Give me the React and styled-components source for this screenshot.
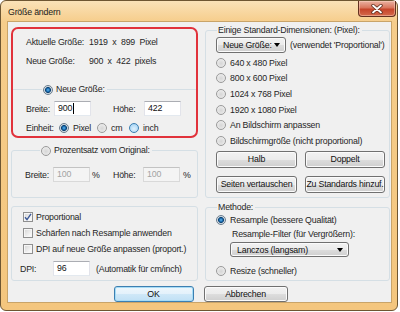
import React from "react";
import styled, { createGlobalStyle, css } from "styled-components";

const GlobalStyle = createGlobalStyle`
  html, body { margin: 0; padding: 0; background: #fff; }
  body {
    font-family: "Liberation Sans", Arial, sans-serif;
    font-size: 8.8px;
    letter-spacing: -0.2px;
    color: #262626;
  }
  * { box-sizing: border-box; }
`;

const Window = styled.div`
  width: 398px;
  height: 311px;
  border: 1px solid #6e5632;
  border-radius: 6px;
  background: linear-gradient(#fae2b8 0, #f6cd8b 21px, #f4c67e 100%);
  display: flex;
  flex-direction: column;
`;

const TitleBar = styled.div`
  height: 20px;
  display: flex;
  align-items: flex-start;
  padding-left: 7px;
`;

const Title = styled.div`
  line-height: 20px;
  padding-top: 1px;
  color: #1a1a1a;
`;

const CloseButton = styled.div`
  margin-left: auto;
  margin-right: 1px;
  width: 38px;
  height: 16px;
  border: 1px solid #63301f;
  border-top: none;
  border-radius: 0 0 4px 4px;
  background: linear-gradient(#eab2a2 0%, #d9765d 45%, #c6452a 55%, #d46a4c 100%);
  box-shadow: inset 0 0 0 1px rgba(255, 220, 200, 0.45);
  display: flex;
  align-items: center;
  justify-content: center;
`;

const Client = styled.div`
  margin: 0 5px 0 6px;
  height: 282px;
  border: 1px solid #c9a469;
  background: #f0f0f0;
  display: flex;
  flex-direction: column;
  padding: 0 1px 0 3px;
`;

const Columns = styled.div`
  display: grid;
  grid-template-columns: 187px 185px;
  grid-template-rows: 176px 83px;
  column-gap: 7px;
`;

const LeftTop = styled.div`
  display: flex;
  flex-direction: column;
  padding-top: 5px;
`;

const RedBox = styled.div`
  height: 111px;
  border: 2px solid #e1323b;
  border-radius: 7px;
  padding-top: 7px;
  display: flex;
  flex-direction: column;
`;

const InfoRow = styled.div`
  display: grid;
  grid-template-columns: 63px auto;
  height: 13px;
  line-height: 13px;
  padding-left: 13px;
  margin-bottom: 6px;
  white-space: pre;
`;

const Group = styled.fieldset`
  margin: ${p => p.$mt || 0}px 0 0 0;
  padding: 0 0 0 ${p => p.$pl || 0}px;
  min-width: 0;
  height: ${p => p.$h}px;
  border: 1px solid #d5dfe5;
  border-radius: 3px;
  ${p => p.$topOnly && css`
    border-width: 1px 0 0 0;
    border-radius: 0;
  `}
`;

const Caption = styled.legend`
  margin-left: ${p => p.$indent || 1}px;
  padding: 0 2px 0 1px;
  height: 13px;
  line-height: 13px;
  display: flex;
  align-items: center;
  gap: 3px;
`;

const Row = styled.div`
  display: flex;
  align-items: center;
  height: ${p => p.$h || 15}px;
  margin-top: ${p => p.$mt || 0}px;
  margin-left: ${p => p.$ml || 0}px;
  white-space: nowrap;
`;

const Label = styled.span`
  width: ${p => p.$w}px;
  margin-left: ${p => p.$ml || 0}px;
  flex: none;
`;

const TextBox = styled.div`
  width: ${p => p.$w || 37}px;
  height: 15px;
  flex: none;
  border: 1px solid;
  border-color: #abadb3 #e2e3ea #e3e9ef #e2e3ea;
  background: #fff;
  padding: 0 3px;
  line-height: 13px;
  color: #111;
  display: flex;
  align-items: center;
  ${p => p.$disabled && css`
    background: #f4f4f4;
    color: #a3a3a3;
    border-color: #c3c3c3 #d9d9d9 #d9d9d9 #d9d9d9;
  `}
`;

const Caret = styled.span`
  width: 1px;
  height: 11px;
  background: #000;
  margin-left: 0.5px;
`;

const Radio = styled.span`
  width: 10px;
  height: 10px;
  flex: none;
  border-radius: 50%;
  border: 1px solid #9a9a9a;
  background: radial-gradient(circle at 50% 55%, #d6d6d6 0, #e6e6e6 55%, #f8f8f8 100%);
  margin-right: 4px;
  ${p => p.$checked && css`
    border-color: #6b7c8c;
    background: radial-gradient(circle, #67b8ef 0, #1c70b4 1.6px, #0d3d6b 2.7px, #c9d6e0 3.2px, #f2f2f2 100%);
  `}
  ${p => p.$hot && css`
    border-color: #3c7fb1;
    background: radial-gradient(circle at 50% 60%, #dff1fd 0, #b5dcf7 60%, #8cc7ee 100%);
  `}
`;

const Check = styled.span`
  width: 10px;
  height: 10px;
  flex: none;
  border: 1px solid #8f8f8f;
  background: linear-gradient(135deg, #d4d4d4, #f4f4f4 70%, #fff);
  box-shadow: inset 0 0 0 1px #f6f6f6;
  margin-right: 3px;
  display: flex;
  align-items: center;
  justify-content: center;
`;

const WinButton = styled.div`
  height: ${p => p.$h || 17}px;
  width: ${p => (p.$w ? `${p.$w}px` : "auto")};
  border: 1px solid #707070;
  border-radius: 3px;
  background: linear-gradient(#f2f2f2 0%, #ebebeb 50%, #dddddd 51%, #cfcfcf 100%);
  box-shadow: inset 0 0 0 1px #fbfbfb;
  display: flex;
  align-items: center;
  justify-content: ${p => p.$left ? "space-between" : "center"};
  padding: ${p => p.$left ? "0 5px 0 6px" : "0"};
  color: #111;
  white-space: nowrap;
  ${p => p.$default && css`
    border-color: #3c7fb1;
    box-shadow: inset 0 0 0 1px #a6dcf6;
    background: linear-gradient(#eef7fc 0%, #e3f1fb 50%, #cfe8f8 51%, #c0e0f5 100%);
  `}
`;

const Arrow = styled.span`
  width: 0;
  height: 0;
  border-left: 3.5px solid transparent;
  border-right: 3.5px solid transparent;
  border-top: 4px solid #000;
`;

const ButtonGrid = styled.div`
  display: grid;
  grid-template-columns: 81px 80px;
  column-gap: 8px;
  row-gap: 8px;
  margin-top: 2px;
`;

const Footer = styled.div`
  display: flex;
  justify-content: center;
  gap: 10px;
  margin-top: 5px;
`;

const RadioRow = ({ children, checked, hot, h = 15.6, mt }) => (
  <Row $h={h} $mt={mt}>
    <Radio $checked={checked} $hot={hot} />
    {children}
  </Row>
);

const CheckRow = ({ children, checked }) => (
  <Row $h={16}>
    <Check>
      {checked && (
        <svg width="8" height="8" viewBox="0 0 8 8">
          <path d="M1 4.2 L3 6.6 L7 0.8" fill="none" stroke="#3d5a98" strokeWidth="1.4" />
        </svg>
      )}
    </Check>
    {children}
  </Row>
);

export default function App() {
  return (
    <>
      <GlobalStyle />
      <Window>
        <TitleBar>
          <Title>Größe ändern</Title>
          <CloseButton>
            <svg width="12" height="10" viewBox="0 0 12 10">
              <path d="M2 1.5 L10 8.5 M10 1.5 L2 8.5" stroke="#5a2a1c" strokeWidth="3.4" strokeLinecap="round" />
              <path d="M2 1.5 L10 8.5 M10 1.5 L2 8.5" stroke="#fff" strokeWidth="1.8" strokeLinecap="round" />
            </svg>
          </CloseButton>
        </TitleBar>
        <Client>
          <Columns>
            <LeftTop>
              <RedBox>
                <InfoRow>
                  <span>Aktuelle Größe:</span>
                  <span>{"1919  x  899  Pixel"}</span>
                </InfoRow>
                <InfoRow>
                  <span>Neue Größe:</span>
                  <span>{"900  x  422  pixels"}</span>
                </InfoRow>
                <Group $topOnly $mt={9} $pl={13} $h={55}>
                  <Caption $indent={16}>
                    <Radio $checked style={{ marginRight: 0 }} />
                    Neue Größe:
                  </Caption>
                  <Row $mt={5}>
                    <Label $w={28}>Breite:</Label>
                    <TextBox>900<Caret /></TextBox>
                    <Label $w={31} $ml={22}>Höhe:</Label>
                    <TextBox>422</TextBox>
                  </Row>
                  <Row $mt={5} $h={14}>
                    <Label $w={33}>Einheit:</Label>
                    <Radio $checked />
                    <Label $w={24}>Pixel</Label>
                    <Radio />
                    <Label $w={18}>cm</Label>
                    <Radio $hot />
                    <span>inch</span>
                  </Row>
                </Group>
              </RedBox>
              <Group $mt={6} $pl={13} $h={54}>
                <Caption $indent={15}>
                  <Radio style={{ marginRight: 0 }} />
                  Prozentsatz vom Original:
                </Caption>
                <Row $mt={10}>
                  <Label $w={28}>Breite:</Label>
                  <TextBox $disabled>100</TextBox>
                  <Label $w={21} $ml={2}>%</Label>
                  <Label $w={30}>Höhe:</Label>
                  <TextBox $disabled>100</TextBox>
                  <Label $w={10} $ml={3}>%</Label>
                </Row>
              </Group>
            </LeftTop>

            <Group $mt={2} $pl={10} $h={174}>
              <Caption>Einige Standard-Dimensionen: (Pixel):</Caption>
              <Row $h={16}>
                <WinButton $w={70} $h={16} $left>
                  Neue Größe:
                  <Arrow />
                </WinButton>
                <Label $ml={4}>(verwendet 'Proportional')</Label>
              </Row>
              <div style={{ height: 2 }} />
              <RadioRow>640 x 480 Pixel</RadioRow>
              <RadioRow>800 x 600 Pixel</RadioRow>
              <RadioRow>1024 x 768 Pixel</RadioRow>
              <RadioRow>1920 x 1080 Pixel</RadioRow>
              <RadioRow>An Bildschirm anpassen</RadioRow>
              <RadioRow>Bildschirmgröße (nicht proportional)</RadioRow>
              <ButtonGrid>
                <WinButton>Halb</WinButton>
                <WinButton>Doppelt</WinButton>
                <WinButton>Seiten vertauschen</WinButton>
                <WinButton>Zu Standards hinzuf.</WinButton>
              </ButtonGrid>
            </Group>

            <Group $mt={8} $pl={11} $h={75}>
              <div style={{ height: 2 }} />
              <CheckRow checked>Proportional</CheckRow>
              <CheckRow>Schärfen nach Resample anwenden</CheckRow>
              <CheckRow>DPI auf neue Größe anpassen (proport.)</CheckRow>
              <Row $mt={4} $ml={-3}>
                <Label $w={33}>DPI:</Label>
                <TextBox>96</TextBox>
                <Label $ml={6}>(Automatik für cm/inch)</Label>
              </Row>
            </Group>

            <Group $mt={2.5} $pl={10} $h={80.5}>
              <Caption>Methode:</Caption>
              <RadioRow checked h={13}>Resample (bessere Qualität)</RadioRow>
              <Row $h={12} $mt={1.5} $ml={16}>Resample-Filter (für Vergrößern):</Row>
              <Row $mt={2} $ml={14}>
                <WinButton $w={119} $h={15} $left>
                  Lanczos (langsam)
                  <Arrow />
                </WinButton>
              </Row>
              <RadioRow h={14} mt={7}>Resize (schneller)</RadioRow>
            </Group>
          </Columns>
          <Footer>
            <WinButton $w={80} $h={16} $default>OK</WinButton>
            <WinButton $w={84} $h={16}>Abbrechen</WinButton>
          </Footer>
        </Client>
      </Window>
    </>
  );
}
